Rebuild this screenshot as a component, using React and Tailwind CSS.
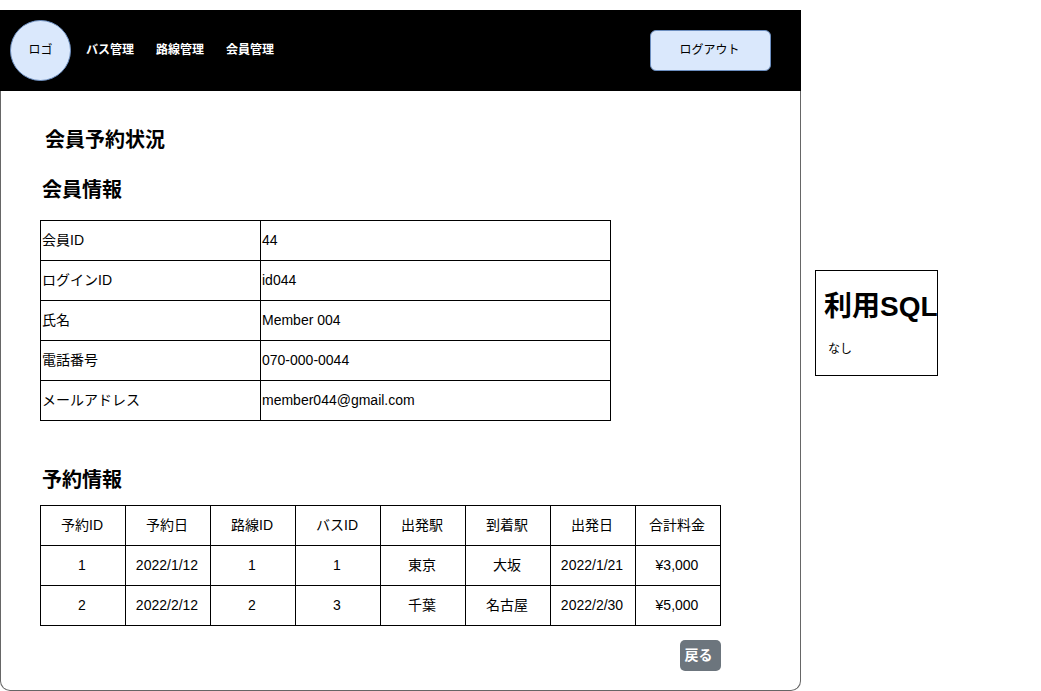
const navItems = ["バス管理", "路線管理", "会員管理"];

const memberRows = [
  ["会員ID", "44"],
  ["ログインID", "id044"],
  ["氏名", "Member 004"],
  ["電話番号", "070-000-0044"],
  ["メールアドレス", "member044@gmail.com"],
];

const reservationHeads = ["予約ID", "予約日", "路線ID", "バスID", "出発駅", "到着駅", "出発日", "合計料金"];

const reservations = [
  ["1", "2022/1/12", "1", "1", "東京", "大坂", "2022/1/21", "¥3,000"],
  ["2", "2022/2/12", "2", "3", "千葉", "名古屋", "2022/2/30", "¥5,000"],
];

function Header() {
  return (
    <header className="flex items-center justify-between bg-black py-[10px] pr-[30px] pl-[10px] text-xs">
      <div className="flex items-center gap-[15px]">
        <a
          href="#"
          className="flex size-[61px] items-center justify-center rounded-full border border-[#6c8ebf] bg-[#dae8fc] pb-0.5"
        >
          ロゴ
        </a>
        <nav className="flex gap-[22px] pb-0.5 font-bold text-white">
          {navItems.map((item) => (
            <a key={item} href="#">
              {item}
            </a>
          ))}
        </nav>
      </div>
      <button
        type="button"
        className="h-[41px] w-[121px] rounded-md border border-[#6c8ebf] bg-[#dae8fc] pr-0.5 pb-0.5"
      >
        ログアウト
      </button>
    </header>
  );
}

function MemberTable() {
  return (
    <table className="mt-[10px] w-[571px] max-w-full table-fixed border-collapse text-left text-sm">
      <tbody>
        {memberRows.map(([label, value]) => (
          <tr key={label} className="h-10">
            <th scope="row" className="w-[220px] border border-black px-px pb-0.5 font-normal">
              {label}
            </th>
            <td className="border border-black px-px pb-0.5">{value}</td>
          </tr>
        ))}
      </tbody>
    </table>
  );
}

function ReservationTable() {
  return (
    <table className="mt-[5px] w-full table-fixed border-collapse text-center text-sm">
      <thead>
        <tr className="h-10">
          {reservationHeads.map((head) => (
            <th key={head} scope="col" className="border border-black pr-0.5 pb-0.5 font-normal">
              {head}
            </th>
          ))}
        </tr>
      </thead>
      <tbody>
        {reservations.map((row) => (
          <tr key={row[0]} className="h-10">
            {row.map((cell, i) => (
              <td key={i} className="border border-black pr-0.5 pb-0.5">
                {cell}
              </td>
            ))}
          </tr>
        ))}
      </tbody>
    </table>
  );
}

export default function App() {
  return (
    <div
      lang="ja"
      className="flex items-start bg-white pt-[10px] font-['Liberation_Sans','Noto_Sans_CJK_JP',sans-serif] text-black"
    >
      <div className="min-w-0 flex-1">
        <Header />
        <main className="rounded-b-[10px] border-x border-b border-[#666666] pt-[29px] pr-[79px] pb-[19px] pl-[39px]">
          <h1 className="pl-[5px] text-xl/10 font-bold">会員予約状況</h1>
          <h2 className="mt-[10px] pl-[2px] text-xl/10 font-bold">会員情報</h2>
          <MemberTable />
          <h2 className="mt-[39px] pl-[2px] text-xl/10 font-bold">予約情報</h2>
          <ReservationTable />
          <div className="mt-[14px] flex justify-end">
            <button
              type="button"
              className="h-[31px] w-[41px] rounded-[5px] bg-[#6c757d] pr-1 pb-0.5 text-sm font-bold text-white"
            >
              戻る
            </button>
          </div>
        </main>
      </div>
      <aside className="w-60 shrink-0 pt-[260px] pl-[14px]">
        <section className="h-[106px] w-[123px] border border-black pt-4 pl-2">
          <h2 className="text-[28px]/10 font-bold whitespace-nowrap">利用SQL</h2>
          <p className="mt-3 pl-1 text-xs/5">なし</p>
        </section>
      </aside>
    </div>
  );
}
